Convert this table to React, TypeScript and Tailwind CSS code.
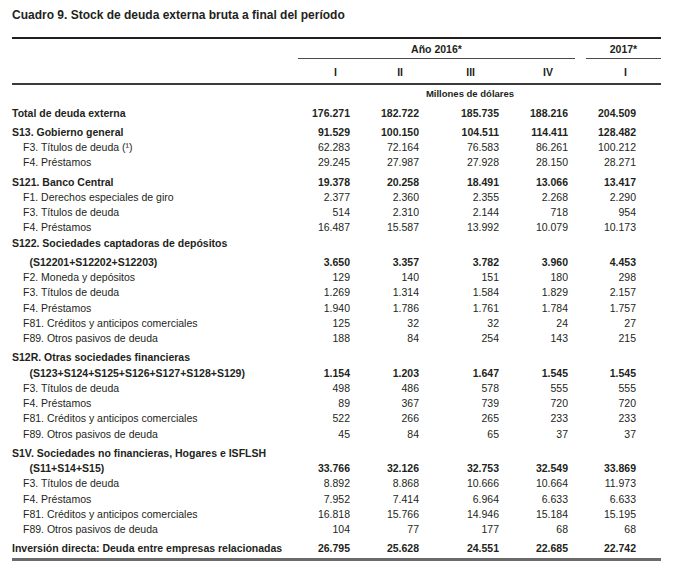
import React from "react";

type Row = {
  label: string;
  values?: string[];
  kind: "bold" | "item" | "cont";
  gap?: boolean;
};

const rows: Row[] = [
  { label: "Total de deuda externa", kind: "bold", values: ["176.271", "182.722", "185.735", "188.216", "204.509"] },
  { label: "S13. Gobierno general", kind: "bold", gap: true, values: ["91.529", "100.150", "104.511", "114.411", "128.482"] },
  { label: "F3. Títulos de deuda (¹)", kind: "item", values: ["62.283", "72.164", "76.583", "86.261", "100.212"] },
  { label: "F4. Préstamos", kind: "item", values: ["29.245", "27.987", "27.928", "28.150", "28.271"] },
  { label: "S121. Banco Central", kind: "bold", gap: true, values: ["19.378", "20.258", "18.491", "13.066", "13.417"] },
  { label: "F1. Derechos especiales de giro", kind: "item", values: ["2.377", "2.360", "2.355", "2.268", "2.290"] },
  { label: "F3. Títulos de deuda", kind: "item", values: ["514", "2.310", "2.144", "718", "954"] },
  { label: "F4. Préstamos", kind: "item", values: ["16.487", "15.587", "13.992", "10.079", "10.173"] },
  { label: "S122. Sociedades captadoras de depósitos", kind: "bold" },
  { label: "(S12201+S12202+S12203)", kind: "cont", gap: true, values: ["3.650", "3.357", "3.782", "3.960", "4.453"] },
  { label: "F2. Moneda y depósitos", kind: "item", values: ["129", "140", "151", "180", "298"] },
  { label: "F3. Títulos de deuda", kind: "item", values: ["1.269", "1.314", "1.584", "1.829", "2.157"] },
  { label: "F4. Préstamos", kind: "item", values: ["1.940", "1.786", "1.761", "1.784", "1.757"] },
  { label: "F81. Créditos y anticipos comerciales", kind: "item", values: ["125", "32", "32", "24", "27"] },
  { label: "F89. Otros pasivos de deuda", kind: "item", values: ["188", "84", "254", "143", "215"] },
  { label: "S12R. Otras sociedades financieras", kind: "bold", gap: true },
  { label: "(S123+S124+S125+S126+S127+S128+S129)", kind: "cont", values: ["1.154", "1.203", "1.647", "1.545", "1.545"] },
  { label: "F3. Títulos de deuda", kind: "item", values: ["498", "486", "578", "555", "555"] },
  { label: "F4. Préstamos", kind: "item", values: ["89", "367", "739", "720", "720"] },
  { label: "F81. Créditos y anticipos comerciales", kind: "item", values: ["522", "266", "265", "233", "233"] },
  { label: "F89. Otros pasivos de deuda", kind: "item", values: ["45", "84", "65", "37", "37"] },
  { label: "S1V. Sociedades no financieras, Hogares e ISFLSH", kind: "bold", gap: true },
  { label: "(S11+S14+S15)", kind: "cont", values: ["33.766", "32.126", "32.753", "32.549", "33.869"] },
  { label: "F3. Títulos de deuda", kind: "item", values: ["8.892", "8.868", "10.666", "10.664", "11.973"] },
  { label: "F4. Préstamos", kind: "item", values: ["7.952", "7.414", "6.964", "6.633", "6.633"] },
  { label: "F81. Créditos y anticipos comerciales", kind: "item", values: ["16.818", "15.766", "14.946", "15.184", "15.195"] },
  { label: "F89. Otros pasivos de deuda", kind: "item", values: ["104", "77", "177", "68", "68"] },
  { label: "Inversión directa: Deuda entre empresas relacionadas", kind: "bold", gap: true, values: ["26.795", "25.628", "24.551", "22.685", "22.742"] },
];

const gridCols = "grid grid-cols-[288px_50px_69px_80px_69px_68px_25px]";

export default function App() {
  return (
    <div className="w-[673px] h-[562px] bg-white pl-[12px] pt-[7px] overflow-hidden font-['Liberation_Sans',Arial,sans-serif] text-[#231f20]">
      {/* Title */}
      <h1 className="text-[12px] leading-[16px] font-bold">
        Cuadro 9. Stock de deuda externa bruta a final del período
      </h1>

      <div className="w-[649px] mt-[14px] h-[2px] bg-[#231f20]" />

      {/* Year header */}
      <div className="flex w-[649px] text-[10.5px] font-bold leading-[14px]">
        <div className="w-[286px]" />
        <div className="w-[277px] text-center pt-[3px] pb-[2px] border-b-[1.5px] border-[#4a4a4a]">Año 2016*</div>
        <div className="w-[11px]" />
        <div className="w-[75px] text-center pt-[3px] pb-[2px] border-b-[1.5px] border-[#4a4a4a]">2017*</div>
      </div>

      {/* Quarters */}
      <div className={`${gridCols} mt-[5.5px] text-[10.5px] font-bold leading-[14px] text-right`}>
        <div />
        <div className="pr-[13px]">I</div>
        <div className="pr-[16px]">II</div>
        <div className="pr-[24px]">III</div>
        <div className="pr-[15px]">IV</div>
        <div className="pr-[9px]">I</div>
        <div />
      </div>

      <div className="w-[649px] mt-[4.5px] h-[2px] bg-[#3a3a3a]" />

      <div className={`${gridCols} mt-[1.5px] text-[9.5px] font-bold leading-[14px]`}>
        <div />
        <div className="col-span-5 text-center pl-[4px]">Millones de dólares</div>
      </div>

      {/* Body */}
      <div className="mt-[5px] text-[10.5px]">
        {rows.map((r, i) => (
          <div
            key={i}
            className={`${gridCols} h-[15.25px] leading-[15.25px] whitespace-nowrap ${r.gap ? "mt-[4px]" : ""} ${r.kind === "item" ? "" : "font-bold"}`}
          >
            <div className={r.kind === "item" ? "pl-[11px]" : r.kind === "cont" ? "pl-[17.5px]" : ""}>{r.label}</div>
            {(r.values || ["", "", "", "", ""]).map((v, j) => (
              <div key={j} className="text-right">{v}</div>
            ))}
            <div />
          </div>
        ))}
      </div>

      <div className="w-[649px] mt-[1.5px] h-[3px] bg-[#6b6b6b]" />
    </div>
  );
}
